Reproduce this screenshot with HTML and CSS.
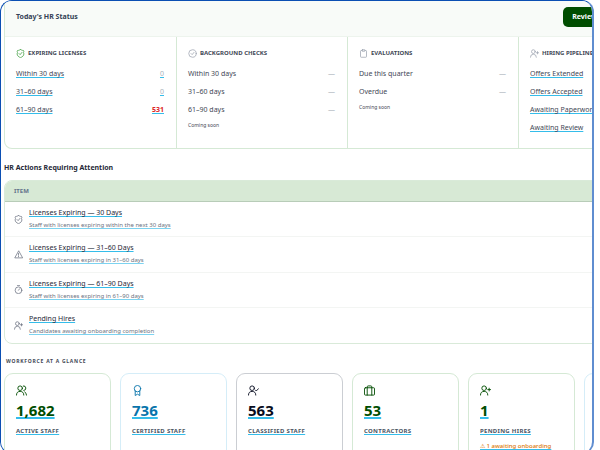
FILE: index.html
```html
<!DOCTYPE html>
<html lang="en">
<head>
    <meta charset="UTF-8">
    <meta name="viewport" content="width=device-width, initial-scale=1.0">
    <title>HR Dashboard</title>
    <link rel="stylesheet" href="styles.css">
</head>
<body>
    <svg class="sprite" aria-hidden="true">
        <symbol id="shield" viewBox="0 0 24 24"><path d="M12 1c2 2 5 3 8 3l1 2-1 3 1 4c0 5-4 8-9 10-5-2-9-5-9-10l1-4-1-3 1-2c3 0 6-1 8-3z"/><path d="M8 12l3 3 5-6"/></symbol>
        <symbol id="check" viewBox="0 0 24 24"><circle cx="12" cy="12" r="10"/><path d="M8 12l3 3 5-6"/></symbol>
        <symbol id="clipboard" viewBox="0 0 24 24"><path d="M8 4H6a2 2 0 0 0-2 2v14a2 2 0 0 0 2 2h12a2 2 0 0 0 2-2V6a2 2 0 0 0-2-2h-2"/><rect x="8" y="2" width="8" height="4" rx="1"/></symbol>
        <symbol id="user-plus" viewBox="0 0 24 24"><circle cx="9" cy="7" r="5"/><path d="M1 22a8 8 0 0 1 16 0M20 7v6M17 10h6"/></symbol>
        <symbol id="user-check" viewBox="0 0 24 24"><circle cx="9" cy="7" r="5"/><path d="M1 22a8 8 0 0 1 16 0M16 11l2 2 5-5"/></symbol>
        <symbol id="users" viewBox="0 0 24 24"><circle cx="9" cy="7" r="5"/><path d="M1 22a8 8 0 0 1 16 0M16 2a5 5 0 0 1 1 10M19 15a8 8 0 0 1 4 7"/></symbol>
        <symbol id="warning" viewBox="0 0 24 24"><path d="M12 3L2 21h20zM12 9v5M12 17v1"/></symbol>
        <symbol id="timer" viewBox="0 0 24 24"><circle cx="12" cy="14" r="9"/><path d="M9 1h6M12 14l3-4"/></symbol>
        <symbol id="award" viewBox="0 0 24 24"><circle cx="12" cy="8" r="7"/><path d="M7 13v10l5-3 5 3V13"/></symbol>
        <symbol id="case" viewBox="0 0 24 24"><rect x="1" y="6" width="22" height="16" rx="2"/><path d="M7 22V4a2 2 0 0 1 2-2h6a2 2 0 0 1 2 2v18"/></symbol>
    </svg>

    <main class="frame">
        <section class="status">
            <header class="status-header">
                <h2>Today's HR Status</h2>
                <button class="review-button" type="button">Review</button>
            </header>
            <div class="status-columns">
                <div class="status-column">
                    <h3><svg class="icon icon-green"><use href="#shield"/></svg>Expiring Licenses</h3>
                    <div class="line"><a href="#">Within 30 days</a><a class="zero" href="#">0</a></div>
                    <div class="line"><a href="#">31–60 days</a><a class="zero" href="#">0</a></div>
                    <div class="line"><a href="#">61–90 days</a><a class="alert" href="#">531</a></div>
                </div>
                <div class="status-column">
                    <h3><svg class="icon"><use href="#check"/></svg>Background Checks</h3>
                    <div class="line"><span>Within 30 days</span><span class="dash">—</span></div>
                    <div class="line"><span>31–60 days</span><span class="dash">—</span></div>
                    <div class="line"><span>61–90 days</span><span class="dash">—</span></div>
                    <p class="soon">Coming soon</p>
                </div>
                <div class="status-column">
                    <h3><svg class="icon"><use href="#clipboard"/></svg>Evaluations</h3>
                    <div class="line"><span>Due this quarter</span><span class="dash">—</span></div>
                    <div class="line"><span>Overdue</span><span class="dash">—</span></div>
                    <p class="soon">Coming soon</p>
                </div>
                <div class="status-column">
                    <h3><svg class="icon"><use href="#user-plus"/></svg>Hiring Pipeline</h3>
                    <div class="line"><a href="#">Offers Extended</a></div>
                    <div class="line"><a href="#">Offers Accepted</a></div>
                    <div class="line"><a href="#">Awaiting Paperwork</a></div>
                    <div class="line"><a href="#">Awaiting Review</a></div>
                </div>
            </div>
        </section>

        <h2 class="actions-title">HR Actions Requiring Attention</h2>
        <div class="actions">
            <table class="actions-table">
                <thead>
                    <tr><th>Item</th></tr>
                </thead>
                <tbody>
                    <tr><td><div class="item"><svg class="icon"><use href="#shield"/></svg><div><a class="item-title" href="#">Licenses Expiring — 30 Days</a><br><a class="item-note" href="#">Staff with licenses expiring within the next 30 days</a></div></div></td></tr>
                    <tr><td><div class="item"><svg class="icon"><use href="#warning"/></svg><div><a class="item-title" href="#">Licenses Expiring — 31–60 Days</a><br><a class="item-note" href="#">Staff with licenses expiring in 31–60 days</a></div></div></td></tr>
                    <tr><td><div class="item"><svg class="icon"><use href="#timer"/></svg><div><a class="item-title" href="#">Licenses Expiring — 61–90 Days</a><br><a class="item-note" href="#">Staff with licenses expiring in 61–90 days</a></div></div></td></tr>
                    <tr><td><div class="item"><svg class="icon"><use href="#user-plus"/></svg><div><a class="item-title" href="#">Pending Hires</a><br><a class="item-note" href="#">Candidates awaiting onboarding completion</a></div></div></td></tr>
                </tbody>
            </table>
        </div>

        <h2 class="workforce-title">Workforce at a Glance</h2>
        <div class="cards">
            <div class="card green"><svg class="card-icon"><use href="#users"/></svg><a class="number" href="#">1,682</a><a class="label" href="#">Active Staff</a></div>
            <div class="card blue"><svg class="card-icon"><use href="#award"/></svg><a class="number" href="#">736</a><a class="label" href="#">Certified Staff</a></div>
            <div class="card dark"><svg class="card-icon"><use href="#user-check"/></svg><a class="number" href="#">563</a><a class="label" href="#">Classified Staff</a></div>
            <div class="card green"><svg class="card-icon"><use href="#case"/></svg><a class="number" href="#">53</a><a class="label" href="#">Contractors</a></div>
            <div class="card green"><svg class="card-icon"><use href="#user-plus"/></svg><a class="number" href="#">1</a><a class="label" href="#">Pending Hires</a><a class="warn" href="#">⚠ 1 awaiting onboarding</a></div>
            <div class="card blue"></div>
        </div>
    </main>
</body>
</html>
```
FILE: styles.css
```css
* {
    box-sizing: border-box;
}

body {
    margin: 0;
    height: 100vh;
    overflow: hidden;
    background: #fff;
    color: #3f4856;
    font-family: "Noto Sans", "Open Sans", sans-serif;
    font-size: 7px;
}

h2, h3, p {
    margin: 0;
}

a {
    color: inherit;
    text-decoration: underline #35bdea 1px;
    text-underline-offset: 1px;
    text-decoration-skip-ink: none;
}

svg {
    fill: none;
    stroke: currentColor;
    stroke-width: 2;
    stroke-linecap: round;
    stroke-linejoin: round;
    flex: none;
}

.sprite {
    display: none;
}

.frame {
    height: calc(100vh + 4px);
    margin-right: 6px;
    padding-left: 3px;
    overflow: hidden;
    border: 1px solid #0b4fb3;
    border-right: 2px solid #5f8dd0;
    border-radius: 12px;
}

.status {
    width: 690px;
    border: 1px solid #d5e9d5;
    border-top: 0;
    border-radius: 0 0 8px 8px;
}

.status-header {
    display: flex;
    align-items: center;
    height: 36px;
    padding: 0 87px 4px 11px;
    background: #f8fbf8;
    border-bottom: 1px solid #edf4ed;
}

.status-header h2 {
    font-size: 7px;
    color: #334155;
}

.review-button {
    margin-left: auto;
    height: 20px;
    padding: 0 9px;
    border: 0;
    border-radius: 5px;
    background: #004d00;
    color: #fff;
    font: bold 7px "Noto Sans", sans-serif;
}

.status-columns {
    display: grid;
    grid-template-columns: repeat(4, 171px);
    min-height: 111px;
}

.status-column {
    padding: 10px 12px 10px 11px;
}

.status-column + .status-column {
    border-left: 1px solid #d5e9d5;
}

h3 {
    display: flex;
    align-items: center;
    gap: 3px;
    height: 12px;
    margin-bottom: 6px;
    font-size: 6px;
    text-transform: uppercase;
}

.icon {
    width: 9px;
    height: 9px;
    color: #9ca3af;
}

.icon-green {
    color: #3f9e3f;
}

.line {
    display: flex;
    justify-content: space-between;
    height: 18px;
    line-height: 18px;
}

.zero, .dash {
    color: #a9b0ba;
}

.alert {
    color: #dc2626;
    font-weight: bold;
}

.soon {
    font-size: 5px;
    line-height: 13px;
}

.actions-title {
    margin: 14px 0 8px;
    font-size: 7px;
    line-height: 9px;
    color: #1f2937;
}

.actions {
    width: 690px;
    overflow: hidden;
    border: 1px solid #d9ead9;
    border-radius: 8px;
}

.actions-table {
    width: 100%;
    height: 162px;
    border-collapse: separate;
    border-spacing: 0;
}

th {
    height: 21px;
    padding: 0 9px;
    background: #d7e9d5;
    border-bottom: 1px solid #b8ccb8;
    color: #64748b;
    font-size: 6px;
    text-align: left;
    text-transform: uppercase;
}

td {
    height: 35px;
    padding: 0 9px;
    border-bottom: 1px solid #f3f5f3;
}

tr:last-child td {
    border-bottom: 0;
}

.item {
    display: flex;
    align-items: center;
    gap: 6px;
    line-height: 12px;
}

.item .icon {
    color: #6b7280;
}

.item-title {
    color: #1f2937;
}

.item-note {
    color: #6b7280;
    font-size: 6px;
    text-decoration-color: #7dd3f0;
}

.workforce-title {
    margin: 13px 0 7px 2px;
    font-size: 5px;
    line-height: 9px;
    letter-spacing: 0.15em;
    text-transform: uppercase;
}

.cards {
    display: grid;
    grid-template-columns: repeat(6, 107px);
    gap: 9px;
}

.card {
    display: flex;
    flex-direction: column;
    align-items: flex-start;
    height: 94px;
    padding: 11px;
    border: 1px solid #d5e9d5;
    border-radius: 9px;
}

.green {
    color: #004d00;
}

.blue {
    color: #0874ab;
    border-color: #d5edf8;
}

.dark {
    color: #080c20;
    border-color: #cbced3;
}

.card-icon {
    width: 11px;
    height: 11px;
}

.number {
    margin-top: 5px;
    font-size: 15px;
    line-height: 19px;
    font-weight: bold;
    text-decoration-thickness: 2px;
}

.label {
    margin-top: 7px;
    color: #4b5563;
    font-size: 6px;
    line-height: 9px;
    font-weight: bold;
    letter-spacing: 0.05em;
    text-transform: uppercase;
}

.warn {
    margin-top: 6px;
    color: #d97706;
    font-size: 6px;
    line-height: 9px;
    font-weight: 500;
}
```
